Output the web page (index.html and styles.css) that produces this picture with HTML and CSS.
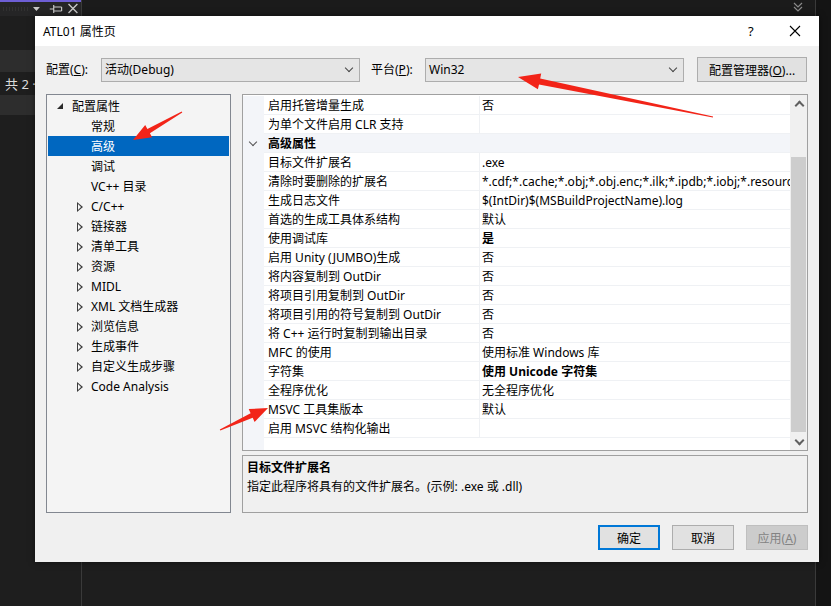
FILE: index.html
```html
<!DOCTYPE html>
<html lang="zh-CN">
<head>
  <meta charset="UTF-8" />
  <title>ATL01 属性页</title>
  <link rel="stylesheet" href="styles.css">
</head>
<body>
  <div class="ide">
    <aside class="tool-pane">
      <div class="tool-head">
        <span class="grip"></span>
        <svg class="tool-icons" width="50" height="12" viewBox="0 0 50 12">
          <path d="M1 4h7l-3.5 4z" fill="#c8c8c8"/>
          <path d="M18 6h4M22 2v8M22 4h8M22 8h8M30 4v4" stroke="#c8c8c8" stroke-width="1.2" fill="none"/>
          <path d="M37 1l9 9M46 1l-9 9" stroke="#c8c8c8" stroke-width="1.4"/>
        </svg>
      </div>
      <div class="tool-row"></div>
      <div class="tool-row alt"></div>
      <div class="tool-row">共 2 ·</div>
      <div class="tool-row alt"></div>
    </aside>
    <main class="editor">
      <div class="editor-top"></div>
    </main>
    <div class="edge">
      <svg class="edge-icon" width="12" height="14" viewBox="0 0 12 14">
        <path d="M2 2l4 4 4-4M2 6l4 4 4-4" stroke="#8a8a8a" stroke-width="1.2" fill="none"/>
      </svg>
    </div>
  </div>

  <div class="dialog">
    <div class="titlebar">
      <span class="title">ATL01 属性页</span>
      <span class="help">?</span>
      <svg class="close" width="12" height="12" viewBox="0 0 12 12">
        <path d="M1 1l10 10M11 1L1 11" stroke="#000" stroke-width="1.1"/>
      </svg>
    </div>

    <div class="dialog-body">
      <div class="config-row">
        <label class="field-label">配置(<u>C</u>):</label>
        <div class="combo">活动(Debug)<span class="chev"></span></div>
        <label class="field-label platform">平台(<u>P</u>):</label>
        <div class="combo">Win32<span class="chev"></span></div>
        <button class="btn manager" type="button">配置管理器(<u>O</u>)...</button>
      </div>

      <div class="panes">
        <ul class="tree">
          <li class="root"><span class="open"></span>配置属性</li>
          <li class="leaf">常规</li>
          <li class="leaf selected">高级</li>
          <li class="leaf">调试</li>
          <li class="leaf">VC++ 目录</li>
          <li class="branch"><span class="closed"></span>C/C++</li>
          <li class="branch"><span class="closed"></span>链接器</li>
          <li class="branch"><span class="closed"></span>清单工具</li>
          <li class="branch"><span class="closed"></span>资源</li>
          <li class="branch"><span class="closed"></span>MIDL</li>
          <li class="branch"><span class="closed"></span>XML 文档生成器</li>
          <li class="branch"><span class="closed"></span>浏览信息</li>
          <li class="branch"><span class="closed"></span>生成事件</li>
          <li class="branch"><span class="closed"></span>自定义生成步骤</li>
          <li class="branch"><span class="closed"></span>Code Analysis</li>
        </ul>

        <div class="right-pane">
          <div class="grid">
            <div class="rows">
              <div class="row"><span class="gutter"></span><span class="name">启用托管增量生成</span><span class="value">否</span></div>
              <div class="row"><span class="gutter"></span><span class="name">为单个文件启用 CLR 支持</span><span class="value"></span></div>
              <div class="row category"><span class="gutter"><span class="cat-chev"></span></span><span class="name">高级属性</span></div>
              <div class="row"><span class="gutter"></span><span class="name">目标文件扩展名</span><span class="value">.exe</span></div>
              <div class="row"><span class="gutter"></span><span class="name">清除时要删除的扩展名</span><span class="value">*.cdf;*.cache;*.obj;*.obj.enc;*.ilk;*.ipdb;*.iobj;*.resources</span></div>
              <div class="row"><span class="gutter"></span><span class="name">生成日志文件</span><span class="value">$(IntDir)$(MSBuildProjectName).log</span></div>
              <div class="row"><span class="gutter"></span><span class="name">首选的生成工具体系结构</span><span class="value">默认</span></div>
              <div class="row"><span class="gutter"></span><span class="name">使用调试库</span><span class="value strong">是</span></div>
              <div class="row"><span class="gutter"></span><span class="name">启用 Unity (JUMBO)生成</span><span class="value">否</span></div>
              <div class="row"><span class="gutter"></span><span class="name">将内容复制到 OutDir</span><span class="value">否</span></div>
              <div class="row"><span class="gutter"></span><span class="name">将项目引用复制到 OutDir</span><span class="value">否</span></div>
              <div class="row"><span class="gutter"></span><span class="name">将项目引用的符号复制到 OutDir</span><span class="value">否</span></div>
              <div class="row"><span class="gutter"></span><span class="name">将 C++ 运行时复制到输出目录</span><span class="value">否</span></div>
              <div class="row"><span class="gutter"></span><span class="name">MFC 的使用</span><span class="value">使用标准 Windows 库</span></div>
              <div class="row"><span class="gutter"></span><span class="name">字符集</span><span class="value strong">使用 Unicode 字符集</span></div>
              <div class="row"><span class="gutter"></span><span class="name">全程序优化</span><span class="value">无全程序优化</span></div>
              <div class="row"><span class="gutter"></span><span class="name">MSVC 工具集版本</span><span class="value">默认</span></div>
              <div class="row"><span class="gutter"></span><span class="name">启用 MSVC 结构化输出</span><span class="value"></span></div>
              <div class="rows-fill"><span class="gutter"></span></div>
            </div>
            <div class="scrollbar">
              <span class="arrow up"></span>
              <span class="track"><span class="thumb"></span></span>
              <span class="arrow down"></span>
            </div>
          </div>
          <div class="description">
            <div class="desc-title">目标文件扩展名</div>
            <div class="desc-text">指定此程序将具有的文件扩展名。(示例: .exe 或 .dll)</div>
          </div>
        </div>
      </div>

      <div class="actions">
        <button class="btn default" type="button">确定</button>
        <button class="btn" type="button">取消</button>
        <button class="btn" type="button" disabled>应用(<u>A</u>)</button>
      </div>
    </div>
  </div>

  <svg class="marks" width="831" height="606" viewBox="0 0 831 606">
    <polygon points="713.1,116.4 540.2,78.5 541.2,73.6 518,77 537.9,89.3 539,84.4 712.9,117.6" />
    <polygon points="181.7,111.5 147.4,128.9 145.2,125 133,140 152.1,137.2 149.9,133.2 182.3,112.5" />
    <polygon points="220.3,430.6 252.7,417.8 254.6,421.9 268,408 248.7,409.1 250.6,413.2 219.8,429.5" />
  </svg>
</body>
</html>
```

FILE: styles.css
```css
* {
  box-sizing: border-box;
}
body {
  margin: 0;
  width: 831px;
  height: 606px;
  overflow: hidden;
  background: #1e1e1e;
  font-family: "Noto Sans", "Noto Sans CJK SC", sans-serif;
  font-size: 12px;
  color: #000;
  position: relative;
}

/* IDE behind the dialog */
.ide {
  display: grid;
  grid-template-columns: 82px 1fr 16px;
  height: 606px;
}
.tool-pane {
  background: #1e1e1e;
  border-right: 1px solid #3a3a3a;
}
.tool-head {
  height: 16px;
  background: #252526;
  border-top: 2px solid #6e5fd6;
  display: flex;
  align-items: center;
}
.grip {
  width: 26px;
  height: 4px;
  margin-left: 2px;
  background-image: radial-gradient(#555 0.6px, transparent 0.8px);
  background-size: 3px 2px;
}
.tool-icons {
  margin-left: 4px;
}
.tool-row {
  height: 34px;
}
.tool-row + .tool-row {
  height: 22px;
}
.tool-row:nth-child(4) {
  height: 23px;
  color: #dcdcdc;
  font-size: 13px;
  line-height: 25px;
  padding-left: 5px;
}
.tool-row:nth-child(5) {
  height: 20px;
}
.tool-row.alt {
  background: #2d2d2d;
}
.editor {
  background: #1e1e1e;
}
.editor-top {
  height: 16px;
  background: #1b1b1b;
}
.edge {
  background: #141414;
  border-left: 1px solid #3a3a3a;
}
.edge-icon {
  display: block;
  margin: 1px 0 0 -24px;
}

/* dialog */
.dialog {
  position: absolute;
  left: 35px;
  top: 16px;
  width: 784px;
  height: 546px;
  background: #f0f0f0;
  box-shadow: 0 0 6px rgba(0, 0, 0, 0.5);
}
.titlebar {
  height: 30px;
  background: #fff;
  display: flex;
  align-items: center;
  padding-left: 8px;
}
.title {
  flex: 1;
  font-size: 12px;
}
.help {
  font-size: 13px;
  width: 20px;
  margin-right: 21px;
}
.close {
  margin-right: 18px;
}
.dialog-body {
  padding: 11px 11px 12px 11px;
}

.config-row {
  display: flex;
  align-items: center;
  height: 25px;
}
.field-label {
  width: 55px;
  line-height: 25px;
}
.field-label.platform {
  margin-left: 11px;
  width: 54px;
}
.combo {
  width: 259px;
  height: 24px;
  border: 1px solid #adadad;
  background: #e5e5e5;
  padding-left: 3px;
  line-height: 22px;
  position: relative;
}
.chev {
  position: absolute;
  right: 7px;
  top: 6px;
  width: 6px;
  height: 6px;
  border-right: 1px solid #444;
  border-bottom: 1px solid #444;
  transform: rotate(45deg);
}
.btn {
  font: inherit;
  color: #000;
  height: 25px;
  width: 62px;
  border: 1px solid #adadad;
  background: #e1e1e1;
  padding: 0;
}
.btn.manager {
  width: 110px;
  margin-left: 13px;
}
.btn.default {
  border: 2px solid #0078d7;
}
.btn:disabled {
  background: #cccccc;
  border-color: #bfbfbf;
  color: #838383;
}

.panes {
  display: flex;
  gap: 11px;
  margin-top: 12px;
  height: 419px;
}
.tree {
  list-style: none;
  margin: 0;
  padding: 1px 1px 0 1px;
  width: 185px;
  border: 1px solid #828790;
  background: #f4f4f4;
}
.tree li {
  height: 20px;
  line-height: 21px;
  position: relative;
  white-space: nowrap;
}
.tree .root {
  padding-left: 24px;
}
.tree .leaf,
.tree .branch {
  padding-left: 43px;
}
.tree .selected {
  background: #0067c0;
  color: #fff;
}
.open {
  position: absolute;
  left: 9px;
  top: 7px;
  width: 0;
  height: 0;
  border-left: 6px solid transparent;
  border-bottom: 6px solid #2a2a2a;
}
/* hollow right-pointing triangle: dark outer, light inner */
.closed {
  position: absolute;
  left: 29px;
  top: 6px;
  width: 0;
  height: 0;
  border-top: 5px solid transparent;
  border-bottom: 5px solid transparent;
  border-left: 6px solid #3c3c3c;
}
.closed::after {
  content: "";
  position: absolute;
  left: -5px;
  top: -3px;
  width: 0;
  height: 0;
  border-top: 3px solid transparent;
  border-bottom: 3px solid transparent;
  border-left: 3.5px solid #f4f4f4;
}

.right-pane {
  flex: 1;
  display: flex;
  flex-direction: column;
  gap: 4px;
}
.grid {
  height: 357px;
  border: 1px solid #a0a0a0;
  background: #fff;
  display: flex;
}
.rows {
  flex: 1;
  display: flex;
  flex-direction: column;
  overflow: hidden;
  padding-top: 1px;
}
.rows::before {
  content: "";
  display: block;
  height: 1px;
  margin-top: -1px;
  margin-left: 21px;
}
.row {
  display: grid;
  grid-template-columns: 21px 215px 1fr;
  height: 19px;
  line-height: 20px;
  white-space: nowrap;
  flex: none;
}
.gutter {
  background: #f3f5f9;
  position: relative;
}
.name,
.value {
  border-bottom: 1px solid #eff1f4;
  overflow: hidden;
}
.name {
  padding-left: 4px;
}
.value {
  border-left: 1px solid #eff1f4;
  padding-left: 2px;
}
.strong {
  font-weight: bold;
}
.row.category {
  grid-template-columns: 21px 1fr;
  background: #f3f5f9;
  font-weight: bold;
}
.cat-chev {
  position: absolute;
  left: 7px;
  top: 5px;
  width: 6px;
  height: 6px;
  border-right: 1.5px solid #555;
  border-bottom: 1.5px solid #555;
  transform: rotate(45deg);
}
.rows-fill {
  flex: 1;
  display: flex;
}
.rows-fill .gutter {
  width: 21px;
}

.scrollbar {
  width: 17px;
  background: #f0f0f0;
  display: flex;
  flex-direction: column;
}
.arrow {
  height: 17px;
  position: relative;
}
.arrow::after {
  content: "";
  position: absolute;
  left: 6px;
  width: 5px;
  height: 5px;
  border-left: 2px solid #606060;
  border-top: 2px solid #606060;
}
.arrow.up::after {
  top: 7px;
  transform: rotate(45deg);
}
.arrow.down::after {
  top: 4px;
  transform: rotate(225deg);
}
.track {
  flex: 1;
  padding: 45px 1px 0 1px;
}
.thumb {
  display: block;
  height: 275px;
  background: #cdcdcd;
}

.description {
  flex: 1;
  border: 1px solid #a0a0a0;
  background: #f0f0f0;
  padding: 2px 4px;
}
.desc-title {
  font-weight: bold;
  line-height: 19px;
}
.desc-text {
  line-height: 19px;
}

.actions {
  display: flex;
  justify-content: flex-end;
  gap: 12px;
  margin-top: 12px;
}

/* red markers drawn over the screenshot */
.marks {
  position: absolute;
  left: 0;
  top: 0;
  pointer-events: none;
}
.marks polygon {
  fill: #f22418;
}
```
